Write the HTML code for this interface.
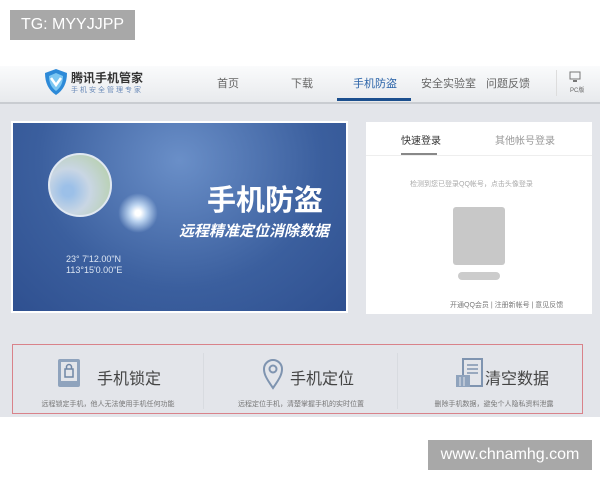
<!DOCTYPE html>
<html><head><meta charset="utf-8"><style>
*{margin:0;padding:0;box-sizing:border-box}
body{width:600px;height:480px;background:#fff;position:relative;overflow:hidden;font-family:"Liberation Sans","Noto Sans CJK SC",sans-serif}
.abs{position:absolute}
.tag{background:#a8a8a8;color:#fff;font-size:16px;display:flex;align-items:center;justify-content:center}
.nav{left:0;top:66px;width:600px;height:38px;background:linear-gradient(#fafbfc,#e8eaed);border-bottom:2px solid #c9ccd1}
.nav span{position:absolute;top:9px;font-size:11px;color:#666}
.gray{left:0;top:104px;width:600px;height:313px;background:#e3e5ea}
.banner{left:11px;top:121px;width:337px;height:192px;border:2px solid #fff;background:radial-gradient(ellipse at 50% 20%,#6a8fc8,#3b5f9e 60%,#2f5090);overflow:hidden}
.login{left:366px;top:122px;width:226px;height:192px;background:#fff}
.box{left:12px;top:344px;width:571px;height:70px;border:1px solid #d9828a}
.col{position:absolute;top:0;height:68px;width:190px}
.col .t{position:absolute;top:20px;font-size:16px;color:#444}
.col .d{position:absolute;top:54px;font-size:7px;color:#777;width:190px;text-align:center;left:0}
</style></head><body>
<div class="abs tag" style="left:10px;top:10px;width:125px;height:30px">TG: MYYJJPP</div>
<div class="abs nav">
 <svg class="abs" style="left:44px;top:2px" width="24" height="28" viewBox="0 0 24 28"><path d="M12 1 L23 5 Q23 20 12 27 Q1 20 1 5 Z" fill="#2d8ad8"/><path d="M12 5 L19 8 Q19 18 12 23 Q5 18 5 8Z" fill="#7cc7f2"/><path d="M7 10 L12 17 L17 10" stroke="#fff" stroke-width="2.5" fill="none"/></svg>
 <span style="left:71px;top:3px;font-size:12px;font-weight:bold;color:#333">腾讯手机管家</span>
 <span style="left:71px;top:19px;font-size:7px;color:#6a8ab8;letter-spacing:2px">手机安全管理专家</span>
 <span style="left:217px">首页</span>
 <span style="left:291px">下载</span>
 <span style="left:353px;color:#2a63a8">手机防盗</span>
 <span style="left:421px">安全实验室</span>
 <span style="left:486px">问题反馈</span>
 <div class="abs" style="left:337px;top:32px;width:74px;height:3px;background:#1c4f8e"></div>
 <div class="abs" style="left:556px;top:4px;width:1px;height:26px;background:#ddd"></div>
 <svg class="abs" style="left:569px;top:5px" width="12" height="12"><rect x="1" y="1" width="10" height="7" fill="none" stroke="#777"/><rect x="4" y="9" width="4" height="2" fill="#777"/></svg>
 <span style="left:570px;top:19px;font-size:6px">PC版</span>
</div>
<div class="abs gray"></div>
<div class="abs banner">
 <div class="abs" style="left:35px;top:30px;width:64px;height:64px;border-radius:50%;background:radial-gradient(circle at 30% 60%,#9cc0e8 10%,#c9d6e4 40%,#b5cfa8 90%);border:2px solid #e0e8f2"></div>
 <div class="abs" style="left:105px;top:70px;width:40px;height:40px;border-radius:50%;background:radial-gradient(#fff 10%,#bcd4f0 30%,rgba(120,160,220,0) 70%)"></div>
 <div class="abs" style="left:194px;top:54px;font-size:29px;font-weight:bold;color:#fff;white-space:nowrap">手机防盗</div>
 <div class="abs" style="left:166px;top:97px;font-size:15px;font-weight:bold;font-style:italic;color:#fff;white-space:nowrap">远程精准定位消除数据</div>
 <div class="abs" style="left:53px;top:131px;font-size:9px;color:#dde6f3;line-height:11px">23° 7'12.00"N<br>113°15'0.00"E</div>
</div>
<div class="abs login">
 <div class="abs" style="left:35px;top:10px;font-size:10px;color:#333">快速登录</div>
 <div class="abs" style="left:35px;top:31px;width:36px;height:2px;background:#888"></div>
 <div class="abs" style="left:129px;top:10px;font-size:10px;color:#999">其他帐号登录</div>
 <div class="abs" style="left:0;top:33px;width:226px;height:1px;background:#eee"></div>
 <div class="abs" style="left:44px;top:57px;font-size:7px;color:#aaa">检测到您已登录QQ帐号，点击头像登录</div>
 <div class="abs" style="left:87px;top:85px;width:52px;height:58px;background:#c8c8c8;border-radius:3px"></div>
 <div class="abs" style="left:92px;top:150px;width:42px;height:8px;background:#ccc;border-radius:4px"></div>
 <div class="abs" style="left:84px;top:178px;font-size:7px;color:#777;white-space:nowrap">开通QQ会员 | 注册新帐号 | 意见反馈</div>
</div>
<div class="abs box">
 <div class="col" style="left:0">
  <svg class="abs" style="left:44px;top:13px" width="24" height="30"><rect x="1" y="1" width="22" height="28" rx="2" fill="#8fa3bd"/><rect x="4" y="4" width="16" height="19" fill="#e3e5ea"/><rect x="8" y="11" width="8" height="8" fill="none" stroke="#6f86a5" stroke-width="1.5"/><path d="M9.5 11 V9 a2.5 2.5 0 0 1 5 0 V11" fill="none" stroke="#6f86a5" stroke-width="1.5"/></svg>
  <span class="t" style="left:84px">手机锁定</span><span class="d">远程锁定手机，他人无法使用手机任何功能</span>
 </div>
 <div class="abs" style="left:190px;top:8px;width:1px;height:56px;background:#d8dbe0"></div>
 <div class="col" style="left:193px">
  <svg class="abs" style="left:56px;top:13px" width="22" height="32"><path d="M11 30 C4 20 2 16 2 11 a9 9 0 0 1 18 0 C20 16 18 20 11 30Z" fill="none" stroke="#7f94b0" stroke-width="2"/><circle cx="11" cy="11" r="3.5" fill="none" stroke="#7f94b0" stroke-width="2"/></svg>
  <span class="t" style="left:84px">手机定位</span><span class="d">远程定位手机，清楚掌握手机的实时位置</span>
 </div>
 <div class="abs" style="left:384px;top:8px;width:1px;height:56px;background:#d8dbe0"></div>
 <div class="col" style="left:386px">
  <svg class="abs" style="left:56px;top:13px" width="28" height="30"><rect x="8" y="1" width="19" height="27" fill="none" stroke="#7f94b0" stroke-width="2"/><path d="M12 7h11M12 11h11M12 15h11" stroke="#7f94b0" stroke-width="1.5"/><rect x="1" y="17" width="14" height="12" fill="#8fa3bd"/><path d="M5 19v9M9 19v9" stroke="#e3e5ea"/></svg>
  <span class="t" style="left:86px">清空数据</span><span class="d">删除手机数据，避免个人隐私资料泄露</span>
 </div>
</div>
<div class="abs tag" style="left:428px;top:440px;width:164px;height:30px">www.chnamhg.com</div>
</body></html>
